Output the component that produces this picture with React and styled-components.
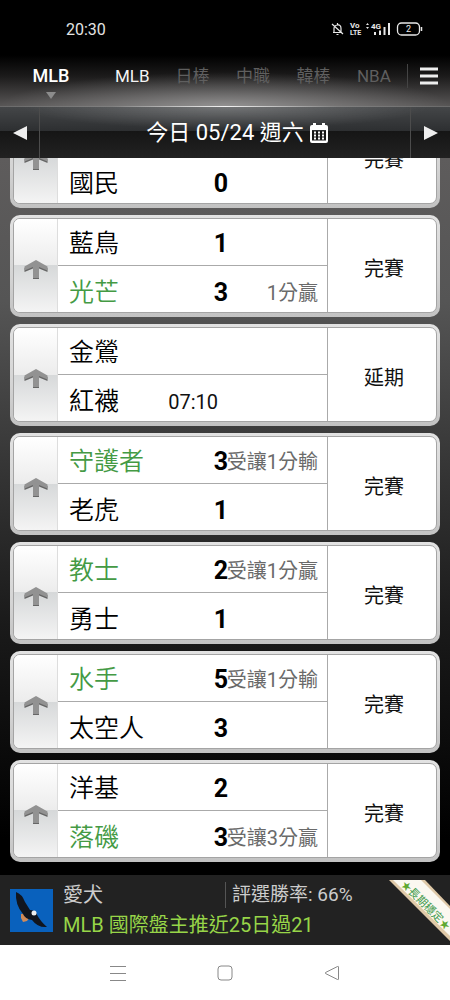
import React from "react";
import styled, { createGlobalStyle } from "styled-components";

const GlobalStyle = createGlobalStyle`
  * {
    box-sizing: border-box;
  }

  body {
    margin: 0;
    background: #000;
    font-family: Roboto, "Noto Sans CJK TC", sans-serif;
  }

  button {
    font-family: inherit;
    border: none;
    background: none;
    padding: 0;
    cursor: pointer;
  }

  svg {
    display: block;
  }
`;

const Page = styled.div`
  height: 100vh;
  display: flex;
  flex-direction: column;
  overflow: hidden;
`;

const Header = styled.header`
  background:
    radial-gradient(ellipse 50% 34px at 50% 100%, rgba(255, 255, 255, 0.35), transparent),
    linear-gradient(#000 52%, #1c1b1b 72%, #585656);
`;

const StatusBar = styled.div`
  height: 58px;
  padding: 0 26px 0 66px;
  display: flex;
  align-items: center;
  justify-content: space-between;
  color: #e4e4e4;
  font-size: 16px;
`;

const Nav = styled.nav`
  height: 48px;
  display: flex;
`;

const Current = styled.button`
  width: 102px;
  padding-top: 8px;
  display: flex;
  flex-direction: column;
  align-items: center;
  color: #fff;
  font-size: 18px;
  font-weight: 500;
  line-height: 20px;
`;

const Caret = styled.span`
  margin-top: 6px;
  border: 5px solid transparent;
  border-top: 7px solid #8c8c8c;
  border-bottom: none;
`;

const Tabs = styled.div`
  flex: 1;
  padding-right: 3px;
  display: flex;
`;

const Tab = styled.button`
  flex: 1;
  height: 36px;
  color: ${({ $active }) => ($active ? "#f4f4f4" : "#5f5f5f")};
  font-size: 17px;
  line-height: 20px;
`;

const MenuButton = styled.button`
  width: 43px;
  height: 24px;
  margin-top: 6px;
  border-left: 1px solid #444;
  display: flex;
  align-items: center;
  justify-content: center;
`;

const DateBar = styled.div`
  height: 52px;
  flex: none;
  display: flex;
  border-top: 1px solid;
  border-image: linear-gradient(90deg, #6a6a6a, #808080 25%, #f4f4f4 50%, #808080 75%, #6a6a6a) 1;
  background:
    radial-gradient(ellipse 45% 22px at 50% 0, rgba(255, 255, 255, 0.25), transparent),
    linear-gradient(#444648, #2d2f31 24px, #151515 24px, #222);
`;

const Arrow = styled.button`
  width: 39px;
  display: flex;
  align-items: center;
  justify-content: center;
`;

const DateButton = styled.button`
  flex: 1;
  padding-left: 24px;
  display: flex;
  align-items: center;
  justify-content: center;
  gap: 6px;
  border: solid #4c4c4c;
  border-width: 0 1px;
  color: #fff;
  font-size: 22px;
  line-height: 32px;
  white-space: nowrap;
`;

const Scores = styled.main`
  flex: 1;
  min-height: 0;
  overflow: hidden;
  padding: 0 10px;
  background: linear-gradient(#5e5c5c, #555 20%, #333 45%, #1a1a1a 65%, #000 95%);
`;

const GameList = styled.div`
  margin-top: -52px;
  display: flex;
  flex-direction: column;
  gap: 7px;
`;

const Card = styled.article`
  flex: none;
  padding: 3px 3px 4px;
  border-radius: 10px;
  background: linear-gradient(#e2e2e2, #d4d4d4 60%, #c2c2c2);
`;

const CardInner = styled.div`
  display: flex;
  overflow: hidden;
  border: 1px solid #a4a4a4;
  border-radius: 7px;
  background: #fff;
`;

const Pick = styled.button`
  width: 44px;
  flex: none;
  display: flex;
  align-items: center;
  justify-content: center;
  padding-top: 7px;
  border-right: 1px solid #ddd;
  background: linear-gradient(#fff, #ececec 50%, #d6d8d9 50%, #f4f4f4);
`;

const Teams = styled.div`
  flex: 1;
  min-width: 0;
`;

const TeamRow = styled.div`
  height: ${({ $home }) => ($home ? 47 : 46)}px;
  padding: ${({ $home }) => ($home ? 7 : 3)}px 9px 0 11px;
  border-top: ${({ $home }) => ($home ? "1px solid #aaa" : "none")};
  display: flex;
  align-items: center;
  justify-content: space-between;
`;

const NameScore = styled.div`
  width: 159px;
  flex: none;
  display: flex;
  align-items: center;
  justify-content: space-between;
`;

const Name = styled.span`
  color: ${({ $win }) => ($win ? "#449a44" : "#000")};
  font-size: 25px;
  font-weight: 350;
  line-height: 36px;
`;

const Score = styled.span`
  color: #000;
  font-size: 25px;
  font-weight: 700;
`;

const StartTime = styled.time`
  margin-right: 10px;
  color: #111;
  font-size: 20px;
`;

const Handicap = styled.span`
  margin-left: -2px;
  color: #6a6a6a;
  font-size: 20px;
  line-height: 28px;
  white-space: nowrap;
`;

const State = styled.div`
  width: 109px;
  flex: none;
  padding: 3px 0 0 4px;
  display: flex;
  align-items: center;
  justify-content: center;
  border-left: 1px solid #aaa;
  color: #111;
  font-size: 20px;
`;

const Promo = styled.a`
  position: relative;
  height: 70px;
  padding: 0 10px;
  flex: none;
  display: flex;
  align-items: center;
  gap: 10px;
  background: #222;
  text-decoration: none;
`;

const PromoText = styled.div`
  display: flex;
  flex-direction: column;
`;

const PromoTop = styled.div`
  display: grid;
  grid-template-columns: 162px 1fr;
  align-items: center;
  color: #ccc;
  font-size: 20px;
  line-height: 30px;
`;

const Rate = styled.span`
  padding-left: 6px;
  border-left: 1px solid #555;
  font-size: 19px;
  line-height: 26px;
  white-space: nowrap;
`;

const Tip = styled.span`
  color: #97d548;
  font-size: 20px;
  line-height: 30px;
`;

const Ribbon = styled.svg`
  position: absolute;
  top: 5px;
  right: 0;
`;

const SystemNav = styled.footer`
  height: 55px;
  flex: none;
  padding: 0 64px;
  display: flex;
  align-items: center;
  justify-content: space-around;
  background: #fff;
`;

const games = [
  { away: [""], home: ["國民", "0"], state: "完賽" },
  { away: ["藍鳥", "1"], home: ["光芒", "3"], win: "home", handicap: "1分贏", state: "完賽" },
  { away: ["金鶯"], home: ["紅襪"], time: "07:10", state: "延期" },
  { away: ["守護者", "3"], home: ["老虎", "1"], win: "away", handicap: "受讓1分輸", state: "完賽" },
  { away: ["教士", "2"], home: ["勇士", "1"], win: "away", handicap: "受讓1分贏", state: "完賽" },
  { away: ["水手", "5"], home: ["太空人", "3"], win: "away", handicap: "受讓1分輸", state: "完賽" },
  { away: ["洋基", "2"], home: ["落磯", "3"], win: "home", handicap: "受讓3分贏", state: "完賽" },
];

const tabs = ["MLB", "日棒", "中職", "韓棒", "NBA"];

const DeviceIcons = () => (
  <svg width="94" height="16" viewBox="0 0 94 16" fill="none" stroke="#e8e8e8">
    <path d="M3 11.500h9M4 11V7.500Q4 4.500 7.500 4T11 7.500V11M7.500 2v2M6.500 13.500h2M2 3l11 10" strokeWidth="1.200" />
    <g fill="#e8e8e8" stroke="none" fontSize="8" fontWeight="700">
      <text x="20" y="7">Vo</text>
      <text x="20" y="14" fontSize="7">LTE</text>
      <text x="41" y="8">4G</text>
    </g>
    <path d="M36 4l1.500-2L39 4zM36 6l1.500 2L39 6z" fill="#e8e8e8" stroke="none" />
    <path d="M45 14v-3M50 14v-4.500M54.500 14V6M59 14V2" strokeWidth="2" />
    <rect x="67.500" y="2" width="22" height="12" rx="4" strokeWidth="1.300" />
    <path d="M91.500 6v4" strokeWidth="1.500" />
    <text x="76" y="11" fontSize="9" fill="#e8e8e8" stroke="none">2</text>
  </svg>
);

const CalendarIcon = () => (
  <svg width="18" height="20" viewBox="0 0 18 20">
    <path
      fill="#fff"
      fillRule="evenodd"
      d="M3 2V0h3v2h6V0h3v2h1q2 0 2 2v14q0 2-2 2H2q-2 0-2-2V4q0-2 2-2zM2 7v10.500h14V7z"
    />
    <path
      stroke="#fff"
      strokeWidth="2"
      strokeDasharray="2 2"
      d="M4 9.500h10.500M4 12.500h10.500M4 15.500h10.500"
    />
  </svg>
);

const UpArrow = () => (
  <svg width="24" height="19" viewBox="0 0 24 19">
    <path d="M12 1.500L23.500 8v4L15 8.500V19H9V8.500L.5 12V8z" fill="#666" />
    <path d="M12 0L23.500 6.500v4L15 7v11H9V7L.5 10.500v-4z" fill="#929292" />
  </svg>
);

const Eagle = () => (
  <svg width="43" height="43" viewBox="0 0 43 43">
    <rect width="43" height="43" fill="#0961bd" />
    <path fill="#d08a58" d="M11 25l6-1 3 4-3 4-4 1-2-4z" />
    <path
      fill="#11151e"
      d="M6 3q6 2 9 10l5 8q4 0 6 3 4 8 11 14-9 1-15-7-7-1-9-6Q5 16 6 3z"
    />
    <circle cx="24" cy="24" r="2.500" fill="#eee" />
  </svg>
);

const GameCard = ({ game }) => (
  <Card>
    <CardInner>
      <Pick aria-label="選擇">
        <UpArrow />
      </Pick>
      <Teams>
        {["away", "home"].map((side) => (
          <TeamRow key={side} $home={side === "home"}>
            <NameScore>
              <Name $win={game.win === side}>{game[side][0]}</Name>
              {game[side][1] && <Score>{game[side][1]}</Score>}
              {side === "home" && game.time && <StartTime>{game.time}</StartTime>}
            </NameScore>
            {game.win === side && <Handicap>{game.handicap}</Handicap>}
          </TeamRow>
        ))}
      </Teams>
      <State>{game.state}</State>
    </CardInner>
  </Card>
);

const App = () => {
  return (
    <Page>
      <GlobalStyle />
      <Header>
        <StatusBar>
          <span>20:30</span>
          <DeviceIcons />
        </StatusBar>
        <Nav>
          <Current>
            MLB
            <Caret />
          </Current>
          <Tabs>
            {tabs.map((tab, i) => (
              <Tab key={tab} $active={i === 0}>
                {tab}
              </Tab>
            ))}
          </Tabs>
          <MenuButton aria-label="選單">
            <svg width="18" height="18" viewBox="0 0 18 18" stroke="#eee" strokeWidth="3">
              <path d="M0 2h18M0 9h18M0 16h18" />
            </svg>
          </MenuButton>
        </Nav>
      </Header>
      <DateBar>
        <Arrow aria-label="前一天">
          <svg width="14" height="14" viewBox="0 0 14 14" fill="#eee">
            <path d="M14 0v14L0 7z" />
          </svg>
        </Arrow>
        <DateButton>
          <span>今日 05/24 週六</span>
          <CalendarIcon />
        </DateButton>
        <Arrow aria-label="後一天">
          <svg width="14" height="14" viewBox="0 0 14 14" fill="#eee">
            <path d="M0 0v14l14-7z" />
          </svg>
        </Arrow>
      </DateBar>
      <Scores>
        <GameList>
          {games.map((game) => (
            <GameCard key={game.home[0]} game={game} />
          ))}
        </GameList>
      </Scores>
      <Promo href="#">
        <Eagle />
        <PromoText>
          <PromoTop>
            <span>愛犬</span>
            <Rate>評選勝率: 66%</Rate>
          </PromoTop>
          <Tip>MLB 國際盤主推近25日過21</Tip>
        </PromoText>
        <Ribbon width="61" height="61" viewBox="0 0 61 61">
          <path d="M0 0h36l25 26v35z" fill="#dfc9a8" />
          <path d="M4 0h28l29 29v27z" fill="#fbf8f0" />
          <g transform="translate(37 25) rotate(45)" fill="#3f9a4c" textAnchor="middle">
            <text y="4" fontSize="11">
              長期穩定
            </text>
            <g fill="#5fa832" fontSize="10">
              <text x="-27" y="4">★</text>
              <text x="27" y="4">★</text>
            </g>
          </g>
        </Ribbon>
      </Promo>
      <SystemNav>
        <button aria-label="最近">
          <svg width="16" height="16" viewBox="0 0 16 16" stroke="#888">
            <path d="M0 1.500h16M0 8.500h16M0 15.500h16" />
          </svg>
        </button>
        <button aria-label="首頁">
          <svg width="16" height="16" viewBox="0 0 16 16" fill="none" stroke="#888">
            <rect x="1" y="1" width="14" height="14" rx="3" />
          </svg>
        </button>
        <button aria-label="返回">
          <svg width="16" height="16" viewBox="0 0 16 16" fill="none" stroke="#888">
            <path d="M14.500 2v12q0 1-1 .5L1.500 8.500q-.8-.5 0-1L13.500 1.500q1-.5 1 .5z" />
          </svg>
        </button>
      </SystemNav>
    </Page>
  );
};

export default App;
